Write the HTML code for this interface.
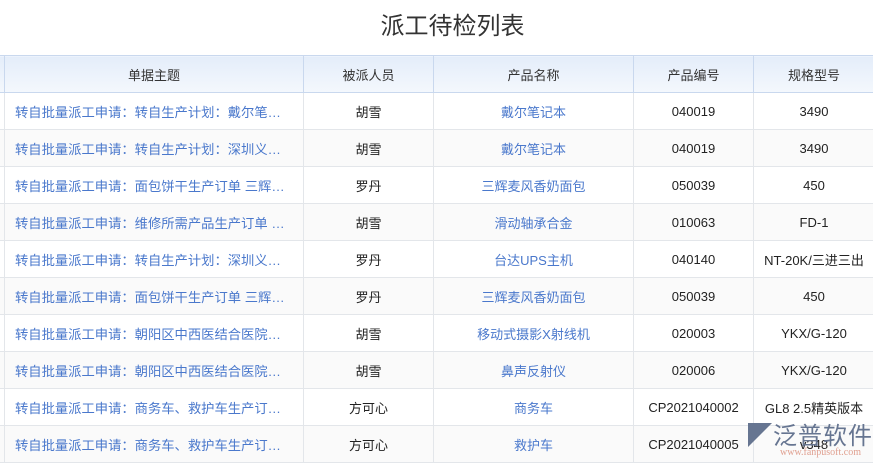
<!DOCTYPE html><html><head><meta charset="utf-8"><style>
body{margin:0;width:873px;height:464px;overflow:hidden;background:#fff;font-family:"Liberation Sans","Noto Sans CJK SC",sans-serif;font-size:13px;color:#222}
h1{margin:0;height:55px;line-height:54px;text-align:center;font-weight:normal;font-size:24px;color:#333;padding-left:32px}
table{position:absolute;top:55px;left:-1px;width:875px;border-collapse:collapse;table-layout:fixed}
td,th{border:1px solid #e3e6ea;height:36px;padding:0 10px;white-space:nowrap;overflow:hidden;text-overflow:ellipsis;text-align:center}
th{font-weight:normal;background:linear-gradient(#e4edfa,#f4f8fd);border-color:#c9d8ee;color:#333}
td.l{text-align:left;color:#4a78cc;padding-left:10px;padding-right:10px;font-size:13.3px}
td.b{color:#4a78cc}
tr:nth-child(odd) td{background:#fafafa}
.wm{position:absolute;left:748px;top:416px;font-size:24px;color:#667591;letter-spacing:1px;white-space:nowrap}
.wm2{position:absolute;left:780px;top:447px;font-size:10px;color:#e0a090;font-family:"Liberation Serif",serif;white-space:nowrap}
</style></head><body>
<h1>派工待检列表</h1>
<table>
<colgroup><col style="width:5px"><col style="width:299px"><col style="width:130px"><col style="width:200px"><col style="width:120px"><col style="width:121px"></colgroup>
<tr><th style="padding:0"></th><th>单据主题</th><th>被派人员</th><th>产品名称</th><th>产品编号</th><th>规格型号</th></tr>
<tr><td style="padding:0"></td><td class="l">转自批量派工申请：转自生产计划：戴尔笔记本生产</td><td>胡雪</td><td class="b">戴尔笔记本</td><td>040019</td><td>3490</td></tr>
<tr><td style="padding:0"></td><td class="l">转自批量派工申请：转自生产计划：深圳义力生产</td><td>胡雪</td><td class="b">戴尔笔记本</td><td>040019</td><td>3490</td></tr>
<tr><td style="padding:0"></td><td class="l">转自批量派工申请：面包饼干生产订单 三辉麦风生产</td><td>罗丹</td><td class="b">三辉麦风香奶面包</td><td>050039</td><td>450</td></tr>
<tr><td style="padding:0"></td><td class="l">转自批量派工申请：维修所需产品生产订单 滑动轴承</td><td>胡雪</td><td class="b">滑动轴承合金</td><td>010063</td><td>FD-1</td></tr>
<tr><td style="padding:0"></td><td class="l">转自批量派工申请：转自生产计划：深圳义力生产</td><td>罗丹</td><td class="b">台达UPS主机</td><td>040140</td><td>NT-20K/三进三出</td></tr>
<tr><td style="padding:0"></td><td class="l">转自批量派工申请：面包饼干生产订单 三辉麦风生产</td><td>罗丹</td><td class="b">三辉麦风香奶面包</td><td>050039</td><td>450</td></tr>
<tr><td style="padding:0"></td><td class="l">转自批量派工申请：朝阳区中西医结合医院提交订单</td><td>胡雪</td><td class="b">移动式摄影X射线机</td><td>020003</td><td>YKX/G-120</td></tr>
<tr><td style="padding:0"></td><td class="l">转自批量派工申请：朝阳区中西医结合医院提交订单</td><td>胡雪</td><td class="b">鼻声反射仪</td><td>020006</td><td>YKX/G-120</td></tr>
<tr><td style="padding:0"></td><td class="l">转自批量派工申请：商务车、救护车生产订单 生产</td><td>方可心</td><td class="b">商务车</td><td>CP2021040002</td><td>GL8 2.5精英版本</td></tr>
<tr><td style="padding:0"></td><td class="l">转自批量派工申请：商务车、救护车生产订单 生产</td><td>方可心</td><td class="b">救护车</td><td>CP2021040005</td><td>v348</td></tr>
</table>
<div class="wm">◤泛普软件</div>
<div class="wm2">www.fanpusoft.com</div>
</body></html>
